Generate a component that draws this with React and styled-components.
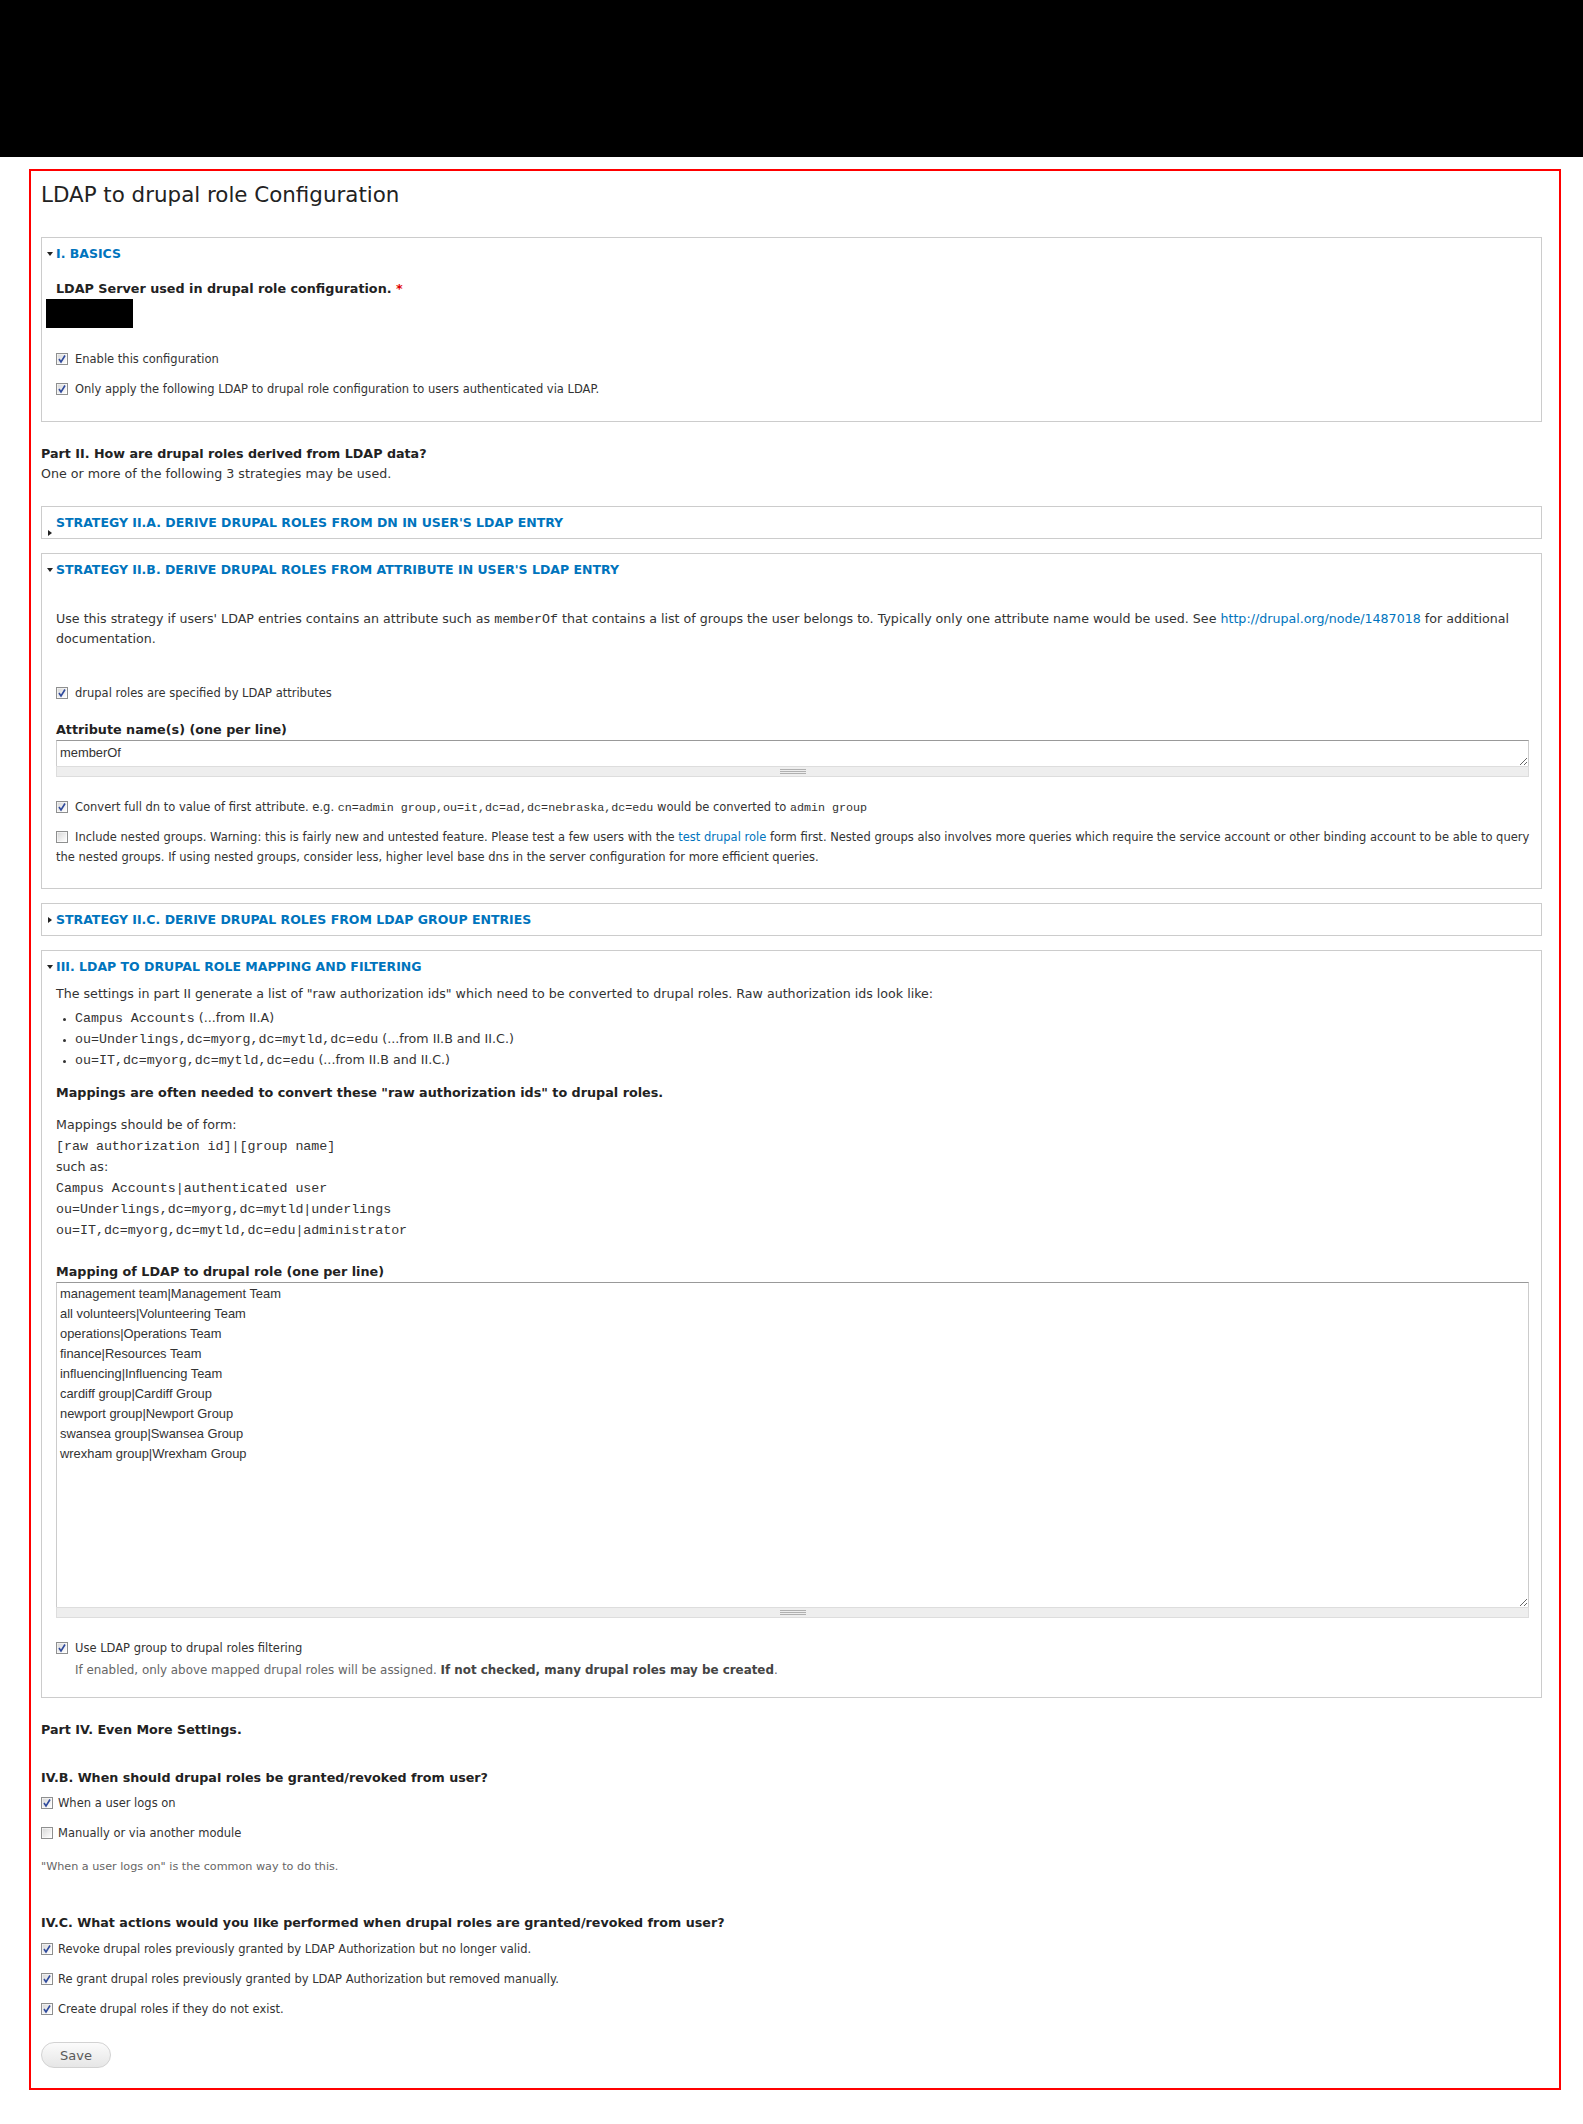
import React from "react";
import styled, { createGlobalStyle } from "styled-components";

const GlobalStyle = createGlobalStyle`
    body {
        margin: 0;
        background: #ffffff;
        color: #333333;
        font-family: "DejaVu Sans", Verdana, sans-serif;
        font-size: 12.65px;
    }
`;

const mappings = [
    "management team|Management Team",
    "all volunteers|Volunteering Team",
    "operations|Operations Team",
    "finance|Resources Team",
    "influencing|Influencing Team",
    "cardiff group|Cardiff Group",
    "newport group|Newport Group",
    "swansea group|Swansea Group",
    "wrexham group|Wrexham Group",
];

const Check = ({ checked }) => (
    <Box>
        <svg width="12" height="12" viewBox="0 0 12 12">
            <defs>
                <linearGradient id="cbfill" x1="0" y1="0" x2="1" y2="1">
                    <stop offset="0" stopColor="#d8d8d8" />
                    <stop offset="1" stopColor="#ffffff" />
                </linearGradient>
            </defs>
            <rect x="0.5" y="0.5" width="11" height="11" fill="#ffffff" stroke="#8e8f8f" />
            <rect x="1.5" y="1.5" width="9" height="9" fill="url(#cbfill)" stroke="none" />
            {checked && (
                <path d="M3 6 L5 9 L9 2.5" fill="none" stroke="#2f4a9c" strokeWidth="1.6" />
            )}
        </svg>
    </Box>
);

const CheckLine = ({ checked, gap, children }) => (
    <CheckRow>
        <Check checked={checked} />
        <Spacer $gap={gap} />
        {children}
    </CheckRow>
);

const Legend = ({ open, drop, children }) => (
    <LegendRow>
        <Arrow $open={open} $drop={drop} />
        <span>{children}</span>
    </LegendRow>
);

const App = () => {
    return (
        <>
            <GlobalStyle />
            <TopBar />
            <Frame>
                <Title>LDAP to drupal role Configuration</Title>

                <Fieldset>
                    <Legend open>I. Basics</Legend>
                    <FieldLabel $top={20}>
                        LDAP Server used in drupal role configuration. <Required>*</Required>
                    </FieldLabel>
                    <Redacted />
                    <Options $top={21}>
                        <CheckLine checked>Enable this configuration</CheckLine>
                        <CheckLine checked>
                            Only apply the following LDAP to drupal role configuration to users authenticated via LDAP.
                        </CheckLine>
                    </Options>
                    <Bottom $h={22} />
                </Fieldset>

                <PartHeading $top={22}>Part II. How are drupal roles derived from LDAP data?</PartHeading>
                <Text>One or more of the following 3 strategies may be used.</Text>

                <Fieldset $top={22} $collapsed>
                    <Legend drop>Strategy II.A. Derive drupal roles from DN in user's LDAP entry</Legend>
                </Fieldset>

                <Fieldset $top={14}>
                    <Legend open>Strategy II.B. Derive drupal roles from attribute in user's LDAP entry</Legend>
                    <Paragraph $top={32}>
                        Use this strategy if users' LDAP entries contains an attribute such as <Code>memberOf</Code> that
                        contains a list of groups the user belongs to. Typically only one attribute name would be used.
                        See <Link href="#">http://drupal.org/node/1487018</Link> for additional
                        <br />
                        documentation.
                    </Paragraph>
                    <Options $top={34}>
                        <CheckLine checked>drupal roles are specified by LDAP attributes</CheckLine>
                    </Options>
                    <FieldLabel $top={19}>Attribute name(s) (one per line)</FieldLabel>
                    <Area rows={1} defaultValue="memberOf" $h={26} />
                    <Grippie><Grip /></Grippie>
                    <Options $top={20}>
                        <CheckLine checked>
                            Convert full dn to value of first attribute. e.g.{" "}
                            <SmallCode>cn=admin group,ou=it,dc=ad,dc=nebraska,dc=edu</SmallCode> would be converted to{" "}
                            <SmallCode>admin group</SmallCode>
                        </CheckLine>
                        <CheckLine>
                            Include nested groups. Warning: this is fairly new and untested feature. Please test a few
                            users with the <Link href="#">test drupal role</Link> form first. Nested groups also involves
                            more queries which require the service account or other binding account to be able to query
                            <br />
                            the nested groups. If using nested groups, consider less, higher level base dns in the server
                            configuration for more efficient queries.
                        </CheckLine>
                    </Options>
                    <Bottom $h={21} />
                </Fieldset>

                <Fieldset $top={14} $collapsed>
                    <Legend>Strategy II.C. Derive drupal roles from LDAP group entries</Legend>
                </Fieldset>

                <Fieldset $top={14}>
                    <Legend open>III. LDAP to drupal role mapping and filtering</Legend>
                    <Paragraph $top={10}>
                        The settings in part II generate a list of "raw authorization ids" which need to be converted to
                        drupal roles. Raw authorization ids look like:
                    </Paragraph>
                    <Bullets>
                        <li><Code>Campus Accounts</Code> (...from II.A)</li>
                        <li><Code>ou=Underlings,dc=myorg,dc=mytld,dc=edu</Code> (...from II.B and II.C.)</li>
                        <li><Code>ou=IT,dc=myorg,dc=mytld,dc=edu</Code> (...from II.B and II.C.)</li>
                    </Bullets>
                    <FieldLabel $top={15}>Mappings are often needed to convert these "raw authorization ids" to drupal roles.</FieldLabel>
                    <Example>
                        Mappings should be of form:
                        <br />
                        <Code>[raw authorization id]|[group name]</Code>
                        <br />
                        such as:
                        <br />
                        <Code>Campus Accounts|authenticated user</Code>
                        <br />
                        <Code>ou=Underlings,dc=myorg,dc=mytld|underlings</Code>
                        <br />
                        <Code>ou=IT,dc=myorg,dc=mytld,dc=edu|administrator</Code>
                    </Example>
                    <FieldLabel $top={24}>Mapping of LDAP to drupal role (one per line)</FieldLabel>
                    <Area rows={16} defaultValue={mappings.join("\n")} $h={325} $padTop={1} />
                    <Grippie><Grip /></Grippie>
                    <Options $top={20}>
                        <CheckLine checked>Use LDAP group to drupal roles filtering</CheckLine>
                    </Options>
                    <Description $indent={19} $size={11.9}>
                        If enabled, only above mapped drupal roles will be assigned.{" "}
                        <strong>If not checked, many drupal roles may be created</strong>.
                    </Description>
                    <Bottom $h={19} />
                </Fieldset>

                <PartHeading $top={22}>Part IV. Even More Settings.</PartHeading>

                <PartHeading $top={28}>IV.B. When should drupal roles be granted/revoked from user?</PartHeading>
                <Options $top={5}>
                    <CheckLine checked gap={5}>When a user logs on</CheckLine>
                    <CheckLine gap={5}>Manually or via another module</CheckLine>
                </Options>
                <Description $top={16}>"When a user logs on" is the common way to do this.</Description>

                <PartHeading $top={38}>IV.C. What actions would you like performed when drupal roles are granted/revoked from user?</PartHeading>
                <Options $top={6}>
                    <CheckLine checked gap={5}>Revoke drupal roles previously granted by LDAP Authorization but no longer valid.</CheckLine>
                    <CheckLine checked gap={5}>Re grant drupal roles previously granted by LDAP Authorization but removed manually.</CheckLine>
                    <CheckLine checked gap={5}>Create drupal roles if they do not exist.</CheckLine>
                </Options>

                <Actions>
                    <SaveButton type="button">Save</SaveButton>
                </Actions>
            </Frame>
        </>
    );
};

export default App;

const TopBar = styled.div`
    height: 157px;
    background: #000000;
`;

const Frame = styled.div`
    margin: 12px 22px 0 29px;
    border: 2px solid #ff0000;
    padding: 10px 17px 20px 10px;
`;

const Title = styled.h1`
    margin: 0 0 28px;
    font-size: 21.4px;
    font-weight: normal;
    line-height: 28px;
    color: #222222;
`;

const Fieldset = styled.div`
    margin-top: ${({ $top }) => $top || 0}px;
    border: 1px solid #cccccc;
    padding: 0 12px ${({ $collapsed }) => ($collapsed ? 8 : 0)}px 14px;
`;

const LegendRow = styled.div`
    display: flex;
    align-items: center;
    gap: 3px;
    margin-left: -9px;
    padding-top: 9px;
    height: 14px;
    line-height: 14px;
    font-size: 12.5px;
    font-weight: bold;
    text-transform: uppercase;
    color: #0074bd;
`;

const Arrow = styled.i`
    display: block;
    width: 0;
    height: 0;
    ${({ $open }) =>
        $open
            ? `border-left: 3px solid transparent;
               border-right: 3px solid transparent;
               border-top: 4px solid #222222;`
            : `border-top: 3px solid transparent;
               border-bottom: 3px solid transparent;
               border-left: 4px solid #222222;
               margin: 0 1px;`}
    transform: translateY(${({ $drop }) => ($drop ? 10 : 0)}px);
`;

const FieldLabel = styled.div`
    margin-top: ${({ $top }) => $top || 0}px;
    font-size: 12.75px;
    font-weight: bold;
    line-height: 16px;
    height: 16px;
    color: #222222;
`;

const Required = styled.span`
    color: #e10000;
`;

const Redacted = styled.div`
    width: 87px;
    height: 29px;
    margin: 2px 0 0 -10px;
    background: #000000;
`;

const Options = styled.div`
    margin-top: ${({ $top }) => $top || 0}px;
    display: flex;
    flex-direction: column;
    gap: 10px;
`;

const CheckRow = styled.div`
    font-size: 11.5px;
    line-height: 20px;
    white-space: nowrap;
`;

const Box = styled.span`
    display: inline-block;
    width: 12px;
    height: 12px;
    line-height: 0;
    vertical-align: -2px;
    svg {
        display: block;
    }
`;

const Spacer = styled.span`
    display: inline-block;
    width: ${({ $gap }) => ($gap == null ? 7 : $gap)}px;
`;

const Bottom = styled.div`
    height: ${({ $h }) => $h}px;
`;

const PartHeading = styled.div`
    margin-top: ${({ $top }) => $top || 0}px;
    font-size: 12.7px;
    font-weight: bold;
    line-height: 20px;
    height: 20px;
    color: #222222;
`;

const Text = styled.div`
    line-height: 20px;
`;

const Paragraph = styled.p`
    margin: ${({ $top }) => $top || 0}px 0 0;
    line-height: 20px;
    white-space: nowrap;
`;

const Code = styled.code`
    font-family: "Liberation Mono", "Courier New", monospace;
    font-size: 13.3px;
    line-height: 1;
    color: #333333;
`;

const SmallCode = styled(Code)`
    font-size: 11.7px;
`;

const Link = styled.a`
    color: #0074bd;
    text-decoration: none;
`;

const Area = styled.textarea`
    display: block;
    box-sizing: border-box;
    width: 100%;
    height: ${({ $h }) => $h}px;
    margin-top: 2px;
    padding: ${({ $padTop }) => ($padTop == null ? 2 : $padTop)}px 3px 0;
    border: 1px solid #cccccc;
    border-top-color: #999999;
    border-bottom: none;
    font-family: "Liberation Sans", Arial, sans-serif;
    font-size: 12.9px;
    line-height: 20px;
    color: #333333;
    resize: vertical;
    overflow: hidden;
    outline: none;
`;

const Grippie = styled.div`
    display: flex;
    justify-content: center;
    align-items: center;
    height: 9px;
    background: #eeeeee;
    border: 1px solid #dddddd;
`;

const Grip = styled.span`
    width: 26px;
    height: 5px;
    background: repeating-linear-gradient(#b0b0b0 0 1px, transparent 1px 2px);
`;

const Bullets = styled.ul`
    margin: 3px 0 0;
    padding: 0 0 0 19px;
    line-height: 21px;
    list-style: disc;
    li {
        height: 21px;
    }
    li::marker {
        font-size: 9px;
    }
`;

const Example = styled.div`
    margin-top: 13px;
    line-height: 21px;
`;

const Description = styled.div`
    margin: ${({ $top }) => $top || 4}px 0 0 ${({ $indent }) => $indent || 0}px;
    font-size: ${({ $size }) => $size || 11.2}px;
    line-height: 16px;
    color: #666666;
    strong {
        color: #444444;
    }
`;

const Actions = styled.div`
    margin-top: 23px;
`;

const SaveButton = styled.button`
    height: 26px;
    width: 70px;
    border: 1px solid #d2d2d2;
    border-radius: 13px;
    background: linear-gradient(#fbfbfb, #e6e6e6);
    font-family: "DejaVu Sans", Verdana, sans-serif;
    font-size: 13px;
    color: #5a5a5a;
    cursor: pointer;
`;
